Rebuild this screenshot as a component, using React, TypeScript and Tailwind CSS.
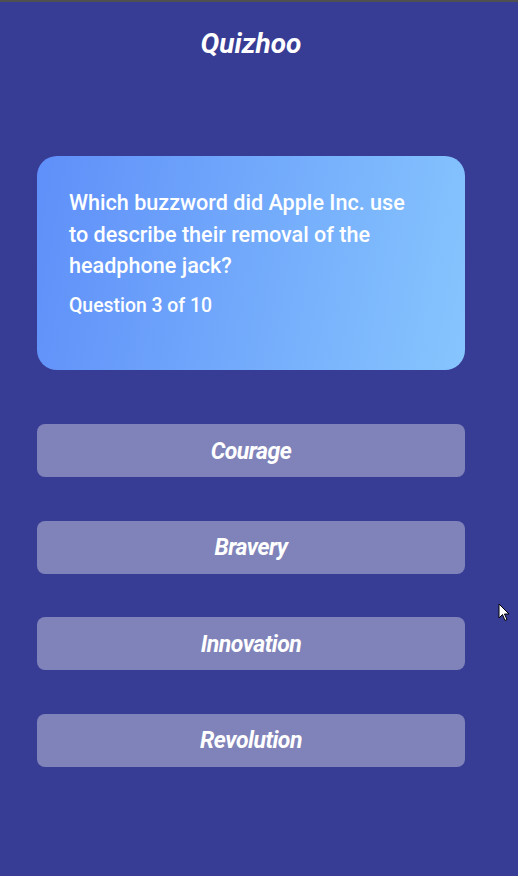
import React from "react";

const answers = ["Courage", "Bravery", "Innovation", "Revolution"];

export default function App() {
  return (
    <div
      className="relative min-h-[876px] w-[518px] bg-[#373c94] overflow-hidden"
      style={{ fontFamily: "Roboto, 'Liberation Sans', sans-serif" }}
    >
      <div className="h-[2px] bg-[#505050]" />
      <div className="w-[428px] ml-[37px] flex flex-col">
        <h1 className="mt-[27px] h-[30px] flex items-center justify-center text-[28px] font-bold italic text-white leading-none">
          Quizhoo
        </h1>
        <div className="mt-[97px] h-[214px] rounded-[20px] bg-[linear-gradient(100deg,#5f8ff9,#86c5fe)] pt-[31px] pl-[32px] pr-[40px] text-white">
          <p className="text-[21.6px] leading-[31.5px] font-medium">
            Which buzzword did Apple Inc. use to describe their removal of the headphone jack?
          </p>
          <p className="mt-[12px] text-[19.4px] leading-[24px] font-medium">Question 3 of 10</p>
        </div>
        <div className="mt-[54px] flex flex-col gap-[43.5px]">
          {answers.map((a) => (
            <button
              key={a}
              className="h-[53px] w-full rounded-[8px] bg-[#8083b9] text-white text-[23px] font-bold italic flex items-center justify-center tracking-[-0.5px] pt-[3px]"
            >
              {a}
            </button>
          ))}
        </div>
      </div>
      <svg
        className="absolute left-[498px] top-[603px]"
        width="12"
        height="19"
        viewBox="0 0 12 19"
      >
        <path d="M1 1 L1 15 L4.5 11.5 L7 17.5 L9 16.5 L6.5 11 L11 11 Z" fill="white" stroke="black" strokeWidth="1" />
      </svg>
    </div>
  );
}
